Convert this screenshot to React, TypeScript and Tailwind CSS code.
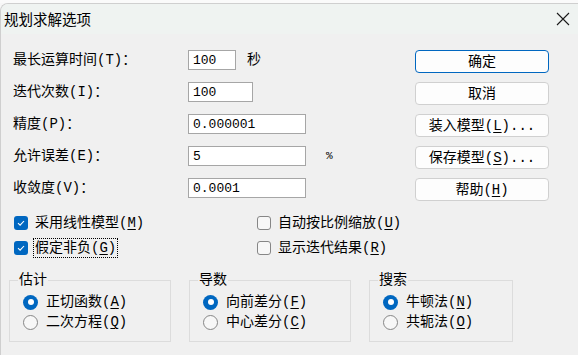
import React from "react";

const F = "font-[family-name:'Liberation_Mono','Noto_Sans_CJK_SC',monospace]";

function U({ c }: { c: string }) {
  return <span className="underline underline-offset-[2px]">{c}</span>;
}

function Row({ label, children }: { label: string; children: React.ReactNode }) {
  return (
    <div className="flex h-[32px] items-center">
      <div className="w-[175px] leading-none">{label}</div>
      {children}
    </div>
  );
}

function Input({ value, w }: { value: string; w: string }) {
  return (
    <div className={`flex h-[20px] items-center border border-[#a6a6a6] bg-white pl-[4px] text-[13px] leading-none ${w}`}>
      {value}
    </div>
  );
}

function Btn({ children, primary }: { children: React.ReactNode; primary?: boolean }) {
  return (
    <div
      className={`flex h-[23px] w-[134px] items-center justify-center rounded-[4px] border bg-[#fdfdfd] leading-none ${
        primary ? "border-[#0067c0]" : "border-[#d0d0d0]"
      }`}
    >
      {children}
    </div>
  );
}

function Check({ checked }: { checked?: boolean }) {
  return checked ? (
    <div className="flex h-[14px] w-[14px] shrink-0 items-center justify-center rounded-[3px] bg-[#0067c0]">
      <svg width="10" height="10" viewBox="0 0 10 10">
        <path d="M2 5.2 L4.1 7.2 L8 3" fill="none" stroke="white" strokeWidth="1.1" />
      </svg>
    </div>
  ) : (
    <div className="h-[14px] w-[14px] shrink-0 rounded-[3px] border border-[#868686] bg-[#f7f7f7]" />
  );
}

function Radio({ on }: { on?: boolean }) {
  return on ? (
    <div className="flex h-[15px] w-[15px] shrink-0 items-center justify-center rounded-full bg-[#0067c0]">
      <div className="h-[6px] w-[6px] rounded-full bg-white" />
    </div>
  ) : (
    <div className="h-[15px] w-[15px] shrink-0 rounded-full border border-[#868686] bg-[#f7f7f7]" />
  );
}

function Group({ title, w, items }: { title: string; w: string; items: [string, string, boolean][] }) {
  return (
    <div className={`relative border border-[#dcdcdc] pb-[9px] pt-[11px] pl-[13px] ${w}`}>
      <div className="absolute left-[8px] top-[-10px] bg-[#f0f0f0] px-[1px] leading-[18px]">{title}</div>
      {items.map(([t, k, on]) => (
        <div key={t} className="flex h-[20px] items-center gap-[8px] leading-none">
          <Radio on={on} />
          <span>
            {t}(<U c={k} />)
          </span>
        </div>
      ))}
    </div>
  );
}

export default function App() {
  return (
    <div className={`h-[355px] w-[578px] overflow-hidden bg-[#f7f7f7] text-[14px] text-black ${F}`}>
      <div className="h-[3px] bg-[#fafafa]" />
      <div className="h-[352px] overflow-hidden rounded-tl-[8px] border-l border-t border-[#cfcfcf] bg-[#f0f0f0]">
        <div className="flex h-[30px] items-center justify-between bg-[#eff3f1] pl-[3px] pr-[7px]">
          <span className="font-[family-name:'Noto_Sans_CJK_SC',sans-serif] text-[14.5px] leading-none">规划求解选项</span>
          <svg width="14" height="14" viewBox="0 0 14 14" className="mr-[1px]">
            <path d="M1 1 L13 13 M13 1 L1 13" stroke="#1a1a1a" strokeWidth="1.1" />
          </svg>
        </div>
        <div className="flex">
          <div className="w-[414px] pl-[12px] pt-[10px]">
            <Row label="最长运算时间(T)：">
              <Input value="100" w="w-[48px]" />
              <span className="ml-[11px] leading-none">秒</span>
            </Row>
            <Row label="迭代次数(I)：">
              <Input value="100" w="w-[65px]" />
            </Row>
            <Row label="精度(P)：">
              <Input value="0.000001" w="w-[118px]" />
            </Row>
            <Row label="允许误差(E)：">
              <Input value="5" w="w-[118px]" />
              <span className="ml-[20px] text-[11px] leading-none">%</span>
            </Row>
            <Row label="收敛度(V)：">
              <Input value="0.0001" w="w-[118px]" />
            </Row>
          </div>
          <div className="flex flex-col gap-[9px] pt-[16px]">
            <Btn primary>确定</Btn>
            <Btn>取消</Btn>
            <Btn>
              装入模型(<U c="L" />)...
            </Btn>
            <Btn>
              保存模型(<U c="S" />)...
            </Btn>
            <Btn>
              帮助(<U c="H" />)
            </Btn>
          </div>
        </div>
        <div className="mt-[6px] flex">
          <div className="w-[256px] pl-[13px]">
            <div className="flex h-[25px] items-center gap-[7px] leading-none">
              <Check checked />
              <span>
                采用线性模型(<U c="M" />)
              </span>
            </div>
            <div className="flex h-[25px] items-center gap-[5px] leading-none">
              <Check checked />
              <span className="flex h-[20px] items-center border border-dotted border-black px-[1px]">
                假定非负(<U c="G" />)
              </span>
            </div>
          </div>
          <div>
            <div className="flex h-[25px] items-center gap-[7px] leading-none">
              <Check />
              <span>
                自动按比例缩放(<U c="U" />)
              </span>
            </div>
            <div className="flex h-[25px] items-center gap-[7px] leading-none">
              <Check />
              <span>
                显示迭代结果(<U c="R" />)
              </span>
            </div>
          </div>
        </div>
        <div className="mt-[20px] flex gap-[18px] pl-[8px]">
          <Group
            title="估计"
            w="w-[162px]"
            items={[
              ["正切函数", "A", true],
              ["二次方程", "Q", false],
            ]}
          />
          <Group
            title="导数"
            w="w-[162px]"
            items={[
              ["向前差分", "F", true],
              ["中心差分", "C", false],
            ]}
          />
          <Group
            title="搜索"
            w="w-[144px]"
            items={[
              ["牛顿法", "N", true],
              ["共轭法", "O", false],
            ]}
          />
        </div>
      </div>
    </div>
  );
}
